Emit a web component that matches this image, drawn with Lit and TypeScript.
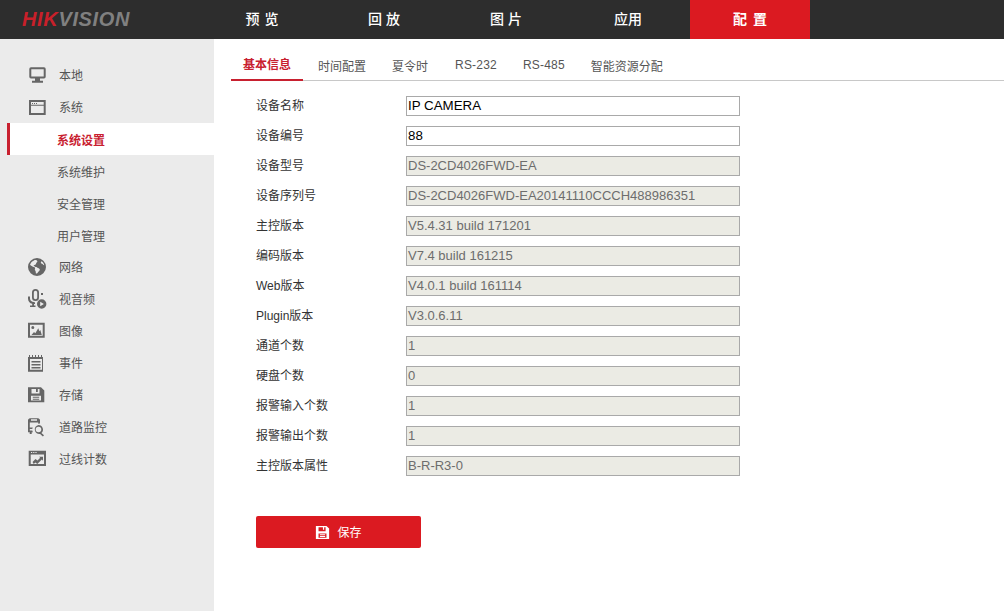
import { LitElement, html, css, svg } from "lit";
import { customElement } from "lit/decorators.js";

const icons: Record<string, unknown> = {
  monitor: svg`<path fill-rule="evenodd" d="M4 2.300h13a1.700 1.700 0 0 1 1.700 1.700v7.800a1.700 1.700 0 0 1-1.700 1.700h-4v2.200h3v2H5v-2h3v-2.200H4a1.700 1.700 0 0 1-1.700-1.700V4A1.700 1.700 0 0 1 4 2.300zm.3 2v7.200h12.400V4.300z"/>`,
  window: svg`<path fill-rule="evenodd" d="M2 3h16.700v15H2zm2 5.700V16h12.700V8.700zm0-3.700v2.700h12.700V5zM5 6h1v1H5zm2 0h1v1H7zm2 0h1v1H9z"/>`,
  globe: svg`<path fill-rule="evenodd" d="M10 1a9 9 0 1 1 0 18 9 9 0 0 1 0-18zM7 3.400C5 4.200 3.400 6 3 8c1 .2 1.400 1.200 2.400 1.400 1 .2 1.600 1 2.600 1 .6.8-.6 1.800 0 2.800.6.800 1 1.600.8 3 .8.600 1.600.2 2-.6.600-1 1.800-1.600 2-2.800.2-1-1-1.400-1.800-1.800-.8-.4-1.400-1.400-2.600-1-.6-.6-1.400-.6-1.800-1.200.4-.8 1.400-.6 2-1.200.8-.8.2-1.400 1-2 .6-.4 1-1 .6-1.600C9.800 3 8 2.800 7 3.400zm7.600.8c-.8.6-1 1.400-.4 2 .6.800 1.800.4 2 1.600.2.400.6.400 1 .4-.2-1.600-1.200-3-2.600-4z"/>`,
  mic: svg`<path fill-rule="evenodd" d="M8.500 0a3.500 3.500 0 0 1 3.500 3.500v5a3.500 3.500 0 0 1-7 0v-5A3.500 3.500 0 0 1 8.500 0zm0 1.800A1.700 1.700 0 0 0 6.800 3.500v5a1.700 1.700 0 0 0 3.400 0v-5a1.700 1.700 0 0 0-1.700-1.700zM1 7.500h2v2c0 2 1.800 3.500 4 3.600.9 0 1.200.9 1 1.900H7v1.500h1.500V18H3v-1.500h2.200v-1.700C2.800 14.300 1 12.200 1 9.700zM14.700 10.300a4.700 4.700 0 1 1 0 9.400 4.700 4.700 0 0 1 0-9.400zm-1.500 2.500v4.400l3.700-2.200zM14 4h2v2h-2z"/>`,
  image: svg`<path fill-rule="evenodd" d="M1 1.700h16.700v15H1zm2 2v11h12.700v-11zM5.800 5a1.500 1.500 0 1 1 0 3 1.500 1.500 0 0 1 0-3zM4.500 14l2.500-3 1.300 1.300 3-5 1 3 1-1.300 1.500 5z"/>`,
  calendar: svg`<path fill-rule="evenodd" d="M1 4h1V2h1v2h2V2h1v2h2V2h1v2h2V2h1v2h2V2h1v2h1v14.700H1zm2 2v10.700h12V6zM4.500 8h9v1.500h-9zm0 3h9v1.500h-9zm0 3h9v1.500h-9z"/>`,
  save: svg`<path fill-rule="evenodd" d="M1 2.300h13l3.300 3.300v11.700H1zm3.500 1.700v4.500h8V4h-1.700v3H9V4zM4 10.700v4.800h10v-4.800zm1.800 1h6.400v1H5.800zm0 2h6.400v1H5.800z"/>`,
  bus: svg`<path fill-rule="evenodd" d="M3 1.300h8c1 0 2 1 2 2v3.200a6 6 0 0 0-1.800.2V5.500H2.800v5h3a6 6 0 0 0-.5 1.500H2.800v1.600h2.500c.1.600.4 1.200.7 1.700H4.700v1.600H2.700v-1.600H1V3.300c0-1 1-2 2-2zm1 1v1.500h6V2.300zM11.500 8a4.500 4.500 0 0 1 2.900 7.900l2.600 2.400-1.100 1.200-2.800-2.600A4.500 4.500 0 1 1 11.500 8zm0 1.700a2.800 2.800 0 1 0 0 5.600 2.800 2.800 0 0 0 0-5.600z"/>`,
  chart: svg`<path fill-rule="evenodd" d="M1.700 1.700H19V17H1.700zm2 3.800v9.500h13.300V5.500zM4 3h1.200v1H4zm2.200 0h1.200v1H6.200zm2.200 0h1.200v1H8.400zM5.500 13l3-3 2 1.500 2.700-2.700-1.200-1h4v4l-1.200-1.200-4.500 4.500-2-1.500-1.500 1.500z"/>`,
};

const nav: [string, number][] = [["预览", 5], ["回放", 4], ["图片", 4], ["应用", 0], ["配置", 6]];
const tabs = ["基本信息", "时间配置", "夏令时", "RS-232", "RS-485", "智能资源分配"];
const menu: { label: string; icon?: string; active?: boolean }[] = [
  { label: "本地", icon: "monitor" },
  { label: "系统", icon: "window" },
  { label: "系统设置", active: true },
  { label: "系统维护" },
  { label: "安全管理" },
  { label: "用户管理" },
  { label: "网络", icon: "globe" },
  { label: "视音频", icon: "mic" },
  { label: "图像", icon: "image" },
  { label: "事件", icon: "calendar" },
  { label: "存储", icon: "save" },
  { label: "道路监控", icon: "bus" },
  { label: "过线计数", icon: "chart" },
];
const fields: [string, string, boolean][] = [
  ["设备名称", "IP CAMERA", false],
  ["设备编号", "88", false],
  ["设备型号", "DS-2CD4026FWD-EA", true],
  ["设备序列号", "DS-2CD4026FWD-EA20141110CCCH488986351", true],
  ["主控版本", "V5.4.31 build 171201", true],
  ["编码版本", "V7.4 build 161215", true],
  ["Web版本", "V4.0.1 build 161114", true],
  ["Plugin版本", "V3.0.6.11", true],
  ["通道个数", "1", true],
  ["硬盘个数", "0", true],
  ["报警输入个数", "1", true],
  ["报警输出个数", "1", true],
  ["主控版本属性", "B-R-R3-0", true],
];

@customElement("app-root")
export class AppRoot extends LitElement {
  static styles = css`
    :host {
      display: block;
      width: 1004px;
      height: 611px;
      overflow: hidden;
      background: #fff;
      font-family: "Liberation Sans", "Noto Sans CJK SC", sans-serif;
      font-size: 12px;
      color: #333;
    }
    .header { height: 39px; background: #2d2d2d; display: flex; }
    .logo {
      width: 202px;
      box-sizing: border-box;
      padding-left: 22px;
      font: italic bold 20px/38px "Liberation Sans", sans-serif;
      letter-spacing: 0.65px;
      color: #808080;
      white-space: nowrap;
    }
    .logo b { color: #c8202a; }
    .nav { display: flex; gap: 2px; }
    .nav div {
      width: 120px;
      text-align: center;
      color: #fff;
      font-size: 14px;
      font-weight: 500;
      line-height: 39px;
    }
    .nav .on { background: #db1a21; font-weight: bold; }
    .main { display: flex; height: 572px; }
    .side { width: 214px; background: #ebebeb; padding-top: 20px; box-sizing: border-box; flex: none; }
    .item {
      height: 32px;
      display: flex;
      align-items: center;
      margin-left: 7px;
      padding: 0 0 2px 20px;
      color: #555;
      box-sizing: border-box;
    }
    .item svg { width: 20px; height: 20px; margin: 2px 12px 0 0; fill: #666; flex: none; }
    .item.sub { padding: 0 0 0 50px; }
    .item.on { background: #fff; border-left: 3px solid #c8202f; padding: 0 0 0 47px; color: #c8202f; font-weight: bold; }
    .content { flex: 1; min-width: 0; padding-left: 17px; }
    .tabs { height: 42px; display: flex; border-bottom: 1px solid #c8c8c8; box-sizing: border-box; }
    .tab { color: #555; padding: 20px 13px 0; line-height: 16px; white-space: nowrap; }
    .tab:nth-child(3) { padding-right: 14px; }
    .tab.on { color: #c8202f; font-weight: bold; width: 72px; box-sizing: border-box; padding: 18px 0 0 12px; margin-right: 2px; border-bottom: 2px solid #c8202f; height: 42px; }
    .tab.latin { padding-top: 18px; letter-spacing: 0.2px; }
    .form { padding: 15px 0 0 25px; }
    .row { height: 30px; display: flex; }
    .row label { width: 150px; line-height: 20px; color: #333; }
    .box {
      width: 334px;
      height: 20px;
      box-sizing: border-box;
      border: 1px solid #a9a9a9;
      background: #fff;
      color: #000;
      font-size: 13.333px;
      line-height: 17px;
      padding-left: 1px;
      white-space: nowrap;
      overflow: hidden;
    }
    .box.off { background: #ebebe4; color: #6d6d6d; font-size: 13px; }
    .save {
      margin-top: 30px;
      width: 165px;
      height: 32px;
      background: #db1a21;
      border-radius: 2px;
      color: #fff;
      display: flex;
      align-items: center;
      justify-content: center;
      gap: 7px;
    }
    .save span { padding-bottom: 1px; }
    .save svg { width: 15px; height: 15px; fill: #fff; }
  `;

  render() {
    return html`
      <div class="header">
        <div class="logo"><b>HIK</b>VISION</div>
        <div class="nav">
          ${nav.map(
            ([n, gap], i) => html`<div
              class=${i === 4 ? "on" : ""}
              style="letter-spacing:${gap}px;text-indent:${gap}px"
            >${n}</div>`
          )}
        </div>
      </div>
      <div class="main">
        <div class="side">
          ${menu.map(
            (m) => html`<div class="item ${m.icon ? "" : "sub"} ${m.active ? "on" : ""}">
              ${m.icon ? html`<svg viewBox="0 0 20 20">${icons[m.icon]}</svg>` : ""}<span>${m.label}</span>
            </div>`
          )}
        </div>
        <div class="content">
          <div class="tabs">
            ${tabs.map(
              (t, i) => html`<div class="tab ${i === 0 ? "on" : ""} ${t.startsWith("RS") ? "latin" : ""}">${t}</div>`
            )}
          </div>
          <div class="form">
            ${fields.map(
              ([l, v, off]) => html`<div class="row"><label>${l}</label><div class="box ${off ? "off" : ""}">${v}</div></div>`
            )}
            <div class="save"><svg viewBox="0 0 17 17"><path fill-rule="evenodd" d="M1 1h12l3 3v12H1zm3 1.500V7h8V2.500h-1.600v3H9v-3zM4 9.500v5h9v-5zm1.500 1h6v1h-6zm0 2h6v1h-6z"/></svg><span>保存</span></div>
          </div>
        </div>
      </div>
    `;
  }
}
